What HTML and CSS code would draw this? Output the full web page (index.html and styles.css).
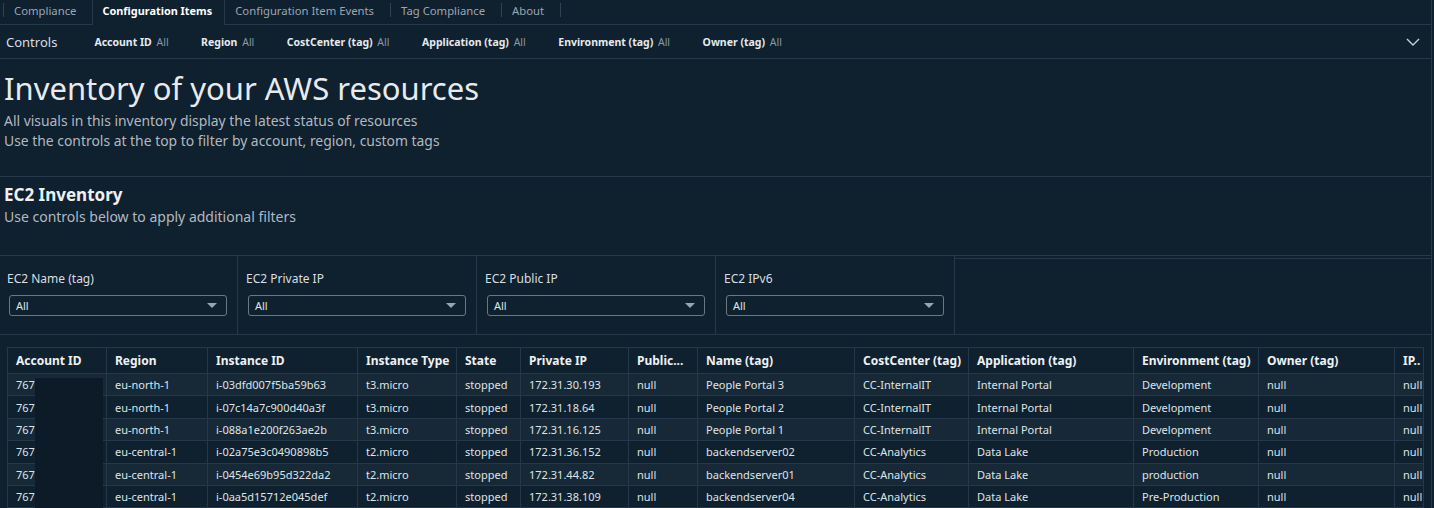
FILE: index.html
```html
<!DOCTYPE html>
<html>
<head>
<meta charset="utf-8">
<link rel="stylesheet" href="styles.css">
</head>
<body>
<div class="page">
  <div class="tabs">
    <span class="sep"></span>
    <span class="tab">Compliance</span>
    <span class="tab active">Configuration Items</span>
    <span class="tab">Configuration Item Events</span>
    <span class="sep"></span>
    <span class="tab">Tag Compliance</span>
    <span class="sep"></span>
    <span class="tab">About</span>
    <span class="sep"></span>
  </div>
  <div class="controls">
    <span class="controls-title">Controls</span>
    <span class="ctl"><b>Account ID</b> All</span>
    <span class="ctl"><b>Region</b> All</span>
    <span class="ctl"><b>CostCenter (tag)</b> All</span>
    <span class="ctl"><b>Application (tag)</b> All</span>
    <span class="ctl"><b>Environment (tag)</b> All</span>
    <span class="ctl"><b>Owner (tag)</b> All</span>
    <svg class="chev" width="14" height="8" viewBox="0 0 14 8"><path d="M1 1 L7 7 L13 1" fill="none" stroke="#c9d1d8" stroke-width="1.4"/></svg>
  </div>
  <div class="hero">
    <h1>Inventory of your AWS resources</h1>
    <p>All visuals in this inventory display the latest status of resources</p>
    <p>Use the controls at the top to filter by account, region, custom tags</p>
  </div>
  <div class="section">
    <h2>EC2 Inventory</h2>
    <p>Use controls below to apply additional filters</p>
  </div>
  <div class="filters">
    <div class="filter">
      <div class="flabel">EC2 Name (tag)</div>
      <div class="select"><span>All</span><i class="caret"></i></div>
    </div>
    <div class="filter">
      <div class="flabel">EC2 Private IP</div>
      <div class="select"><span>All</span><i class="caret"></i></div>
    </div>
    <div class="filter">
      <div class="flabel">EC2 Public IP</div>
      <div class="select"><span>All</span><i class="caret"></i></div>
    </div>
    <div class="filter">
      <div class="flabel">EC2 IPv6</div>
      <div class="select"><span>All</span><i class="caret"></i></div>
    </div>
    <div class="filter-empty"></div>
  </div>
  <div class="table-wrap">
    <table>
      <colgroup>
        <col style="width:99px"><col style="width:101px"><col style="width:150px"><col style="width:99px"><col style="width:64px"><col style="width:108px"><col style="width:69px"><col style="width:157px"><col style="width:114px"><col style="width:165px"><col style="width:125px"><col style="width:136px"><col style="width:29px">
      </colgroup>
      <thead>
        <tr><th>Account ID</th><th>Region</th><th>Instance ID</th><th>Instance Type</th><th>State</th><th>Private IP</th><th>Public...</th><th>Name (tag)</th><th>CostCenter (tag)</th><th>Application (tag)</th><th>Environment (tag)</th><th>Owner (tag)</th><th>IP..</th></tr>
      </thead>
      <tbody>
        <tr><td>767:</td><td>eu-north-1</td><td>i-03dfd007f5ba59b63</td><td>t3.micro</td><td>stopped</td><td>172.31.30.193</td><td>null</td><td>People Portal 3</td><td>CC-InternalIT</td><td>Internal Portal</td><td>Development</td><td>null</td><td>null</td></tr>
        <tr><td>767:</td><td>eu-north-1</td><td>i-07c14a7c900d40a3f</td><td>t3.micro</td><td>stopped</td><td>172.31.18.64</td><td>null</td><td>People Portal 2</td><td>CC-InternalIT</td><td>Internal Portal</td><td>Development</td><td>null</td><td>null</td></tr>
        <tr><td>767:</td><td>eu-north-1</td><td>i-088a1e200f263ae2b</td><td>t3.micro</td><td>stopped</td><td>172.31.16.125</td><td>null</td><td>People Portal 1</td><td>CC-InternalIT</td><td>Internal Portal</td><td>Development</td><td>null</td><td>null</td></tr>
        <tr><td>767:</td><td>eu-central-1</td><td>i-02a75e3c0490898b5</td><td>t2.micro</td><td>stopped</td><td>172.31.36.152</td><td>null</td><td>backendserver02</td><td>CC-Analytics</td><td>Data Lake</td><td>Production</td><td>null</td><td>null</td></tr>
        <tr><td>767:</td><td>eu-central-1</td><td>i-0454e69b95d322da2</td><td>t2.micro</td><td>stopped</td><td>172.31.44.82</td><td>null</td><td>backendserver01</td><td>CC-Analytics</td><td>Data Lake</td><td>production</td><td>null</td><td>null</td></tr>
        <tr><td>767:</td><td>eu-central-1</td><td>i-0aa5d15712e045def</td><td>t2.micro</td><td>stopped</td><td>172.31.38.109</td><td>null</td><td>backendserver04</td><td>CC-Analytics</td><td>Data Lake</td><td>Pre-Production</td><td>null</td><td>null</td></tr>
      </tbody>
    </table>
    <div class="redact"></div>
  </div>
</div>
</body>
</html>
```
FILE: styles.css
```css
* { box-sizing: border-box; }
html, body { margin: 0; padding: 0; background: #0f202e; }
body {
  font-family: "Noto Sans", "Open Sans", sans-serif;
  color: #e6eaed;
  width: 1434px;
  height: 508px;
  overflow: hidden;
}
.page { width: 1432px; border-right: 1px solid #26394a; min-height: 508px; }

.tabs {
  height: 25px;
  display: flex;
  align-items: stretch;
  border-bottom: 1px solid #26394a;
  font-size: 11.3px;
  color: #9ba6b1;
}
.sep { width: 1px; background: #2f4352; margin: 3px 0 7px 0; }
.sep:first-child { margin-left: 3px; }
.tab { padding: 0 16px 0 10px; line-height: 22px; }
.tab.active {
  color: #ffffff;
  font-weight: 700;
  font-size: 10.9px;
  border-left: 1px solid #26394a;
  border-right: 1px solid #26394a;
  margin-bottom: -1px;
  background: #0f202e;
  padding: 0 12px 0 9px;
}
.controls {
  height: 34px;
  display: flex;
  align-items: center;
  border-bottom: 1px solid #26394a;
  padding-left: 6px;
}
.controls-title { font-size: 13px; color: #d9dee2; margin-right: 37px; }
.ctl { font-size: 10.5px; color: #8c98a5; margin-right: 32.5px; }
.ctl b { color: #e6eaed; font-weight: 700; margin-right: 2px; }
.chev { margin-left: auto; margin-right: 11px; }

.hero { padding: 10px 4px 0; height: 118px; border-bottom: 1px solid #26394a; }
.hero h1 { margin: 0 0 4px; font-size: 31px; font-weight: 400; line-height: 38px; color: #e8ebee; }
.hero p { margin: 0; font-size: 13.9px; line-height: 20px; color: #b2b9c0; }

.section { padding: 7px 4px 0; height: 78px; }
.section h2 { margin: 0; font-size: 17px; font-weight: 700; line-height: 22px; color: #eef1f3; }
.section p { margin: 0; font-size: 14px; line-height: 22px; color: #b2b9c0; }

.filters { display: flex; height: 80px; border-top: 1px solid #26394a; border-bottom: 1px solid #26394a; }
.filter { width: 239px; border-right: 1px solid #26394a; padding: 15px 0 0 8px; }
.filter:first-child { width: 238px; padding-left: 7px; }
.flabel { font-size: 12px; color: #d9dee2; line-height: 16px; margin-bottom: 8px; }
.select {
  width: 218px; height: 21px;
  margin-left: 2px;
  border: 1px solid #6a7884;
  border-radius: 3px;
  display: flex; align-items: center; justify-content: space-between;
  padding: 0 9px 0 6px;
  font-size: 11px; color: #dfe4e8;
}
.caret { width: 0; height: 0; border-left: 5px solid transparent; border-right: 5px solid transparent; border-top: 5px solid #9aa4ad; }
.filter-empty { flex: 1; margin-top: 2px; border-top: 1px solid #26394a; }

.table-wrap { position: relative; padding: 12px 0 0 7px; }
table { border-collapse: collapse; table-layout: fixed; width: 1416px; }
th, td { border: 1px solid #23384a; text-align: left; padding: 0 0 0 8px; white-space: nowrap; overflow: hidden; }
th { height: 26px; font-size: 12px; font-weight: 700; color: #eef1f3; }
td { height: 22.4px; font-size: 11px; color: #dfe4e8; }
tbody tr:nth-child(odd) td { background: #172937; }
tbody tr:nth-child(even) td { background: #0f202e; }
.redact { position: absolute; left: 35px; top: 43px; width: 68px; height: 140px; background: #0c1b27; }
```
